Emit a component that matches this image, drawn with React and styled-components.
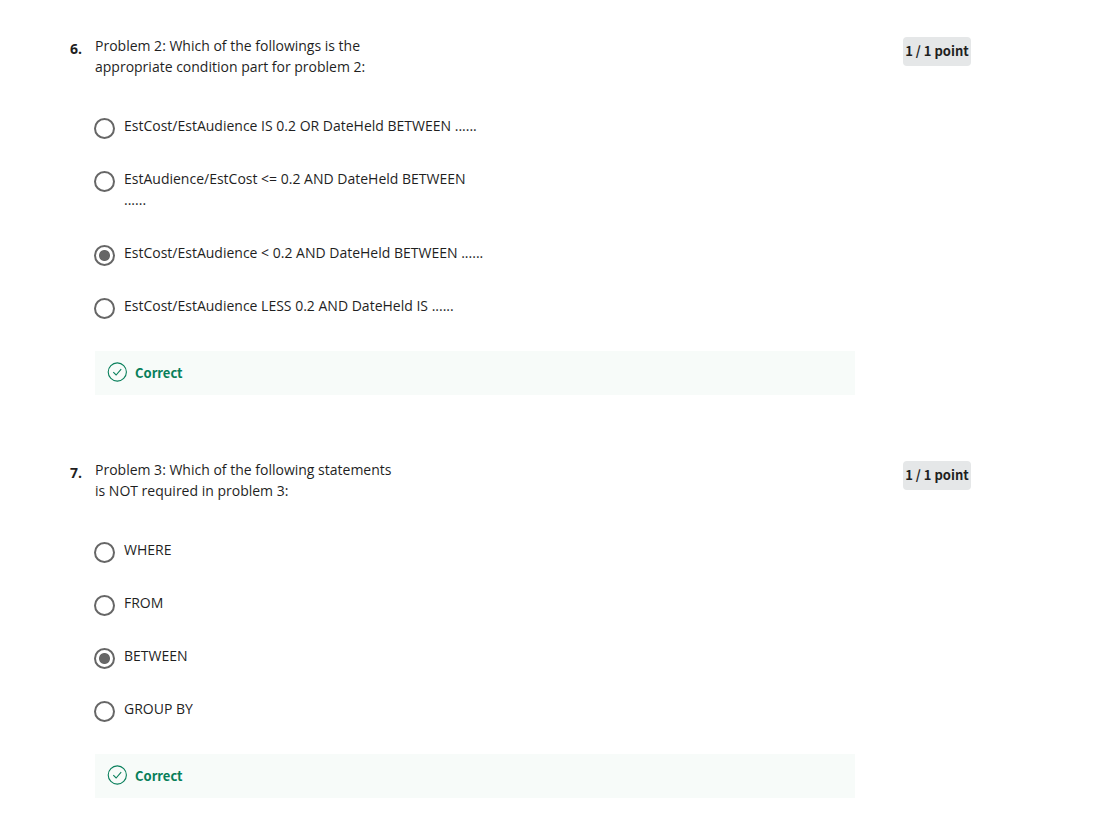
import React, { useState } from "react";
import styled, { createGlobalStyle } from "styled-components";

const GlobalStyle = createGlobalStyle`
  body {
    margin: 0;
    background: #fff;
    color: #1f1f1f;
    font: 14px/21px "Open Sans", sans-serif;
  }
`;

const Page = styled.main`
  display: flex;
  flex-direction: column;
  gap: 64px;
  padding: 35px 131px 18px 70px;
`;

const QuestionRow = styled.section`
  display: flex;
  align-items: flex-start;
`;

const Number = styled.span`
  flex: 0 0 25px;
  font-weight: 700;
  line-height: 27px;
`;

const Body = styled.fieldset`
  flex: 1;
  min-width: 0;
  margin: 0 48px 0 0;
  padding: 0;
  border: 0;
`;

const Prompt = styled.legend`
  max-width: 304px;
  padding: 0;
  margin-bottom: 38px;
`;

const Options = styled.div`
  display: flex;
  flex-direction: column;
  gap: 32px;
  margin-bottom: 35px;
`;

const Option = styled.label`
  display: flex;
  align-items: flex-start;
  gap: 9px;
  margin-left: -1px;
  cursor: pointer;
`;

const Radio = styled.input`
  appearance: none;
  box-sizing: border-box;
  flex: none;
  width: 21px;
  height: 21px;
  margin: 3px 0 -3px;
  border: 2px solid #666;
  border-radius: 50%;
  background: #fff;

  &:checked {
    background: radial-gradient(circle, #666 5px, #fff 6px);
  }
`;

const OptionText = styled.span`
  max-width: 366px;
`;

const Feedback = styled.div`
  display: flex;
  align-items: center;
  gap: 8px;
  box-sizing: border-box;
  height: 44px;
  padding: 0 12px 2px;
  background: #f7fbf9;
  color: #087f5b;
  font-family: "Noto Sans CJK SC", sans-serif;
  font-size: 13px;
  font-weight: 700;
`;

const Badge = styled.span`
  flex: none;
  box-sizing: border-box;
  min-width: 68px;
  margin-top: 2px;
  padding: 3px 2px 5px;
  border-radius: 4px;
  background: #e5e7e8;
  font-family: "Noto Sans CJK SC", sans-serif;
  font-size: 13px;
  font-weight: 700;
  text-align: center;
`;

const CheckIcon = () => (
  <svg width="20" height="20" viewBox="0 0 20 20" fill="none" stroke="currentColor" aria-hidden="true">
    <circle cx="10.3" cy="10" r="9.1" strokeWidth="1.1" />
    <path d="M6.3 10.2 9.1 13 14.2 7.2" strokeWidth="1.1" />
  </svg>
);

const questions = [
  {
    number: 6,
    prompt: "Problem 2: Which of the followings is the appropriate condition part for problem 2:",
    options: [
      "EstCost/EstAudience IS 0.2 OR DateHeld BETWEEN ......",
      "EstAudience/EstCost <= 0.2 AND DateHeld BETWEEN ......",
      "EstCost/EstAudience < 0.2 AND DateHeld BETWEEN ......",
      "EstCost/EstAudience LESS 0.2 AND DateHeld IS ......",
    ],
    answer: 2,
  },
  {
    number: 7,
    prompt: "Problem 3: Which of the following statements is NOT required in problem 3:",
    options: ["WHERE", "FROM", "BETWEEN", "GROUP BY"],
    answer: 2,
  },
];

function Question({ number, prompt, options, answer }) {
  const [selected, setSelected] = useState(answer);
  return (
    <QuestionRow>
      <Number>{number}.</Number>
      <Body>
        <Prompt>{prompt}</Prompt>
        <Options>
          {options.map((text, i) => (
            <Option key={text}>
              <Radio
                type="radio"
                name={`question-${number}`}
                checked={selected === i}
                onChange={() => setSelected(i)}
              />
              <OptionText>{text}</OptionText>
            </Option>
          ))}
        </Options>
        <Feedback>
          <CheckIcon />
          Correct
        </Feedback>
      </Body>
      <Badge>1 / 1 point</Badge>
    </QuestionRow>
  );
}

export default function App() {
  return (
    <>
      <GlobalStyle />
      <Page>
        {questions.map((q) => (
          <Question key={q.number} {...q} />
        ))}
      </Page>
    </>
  );
}
